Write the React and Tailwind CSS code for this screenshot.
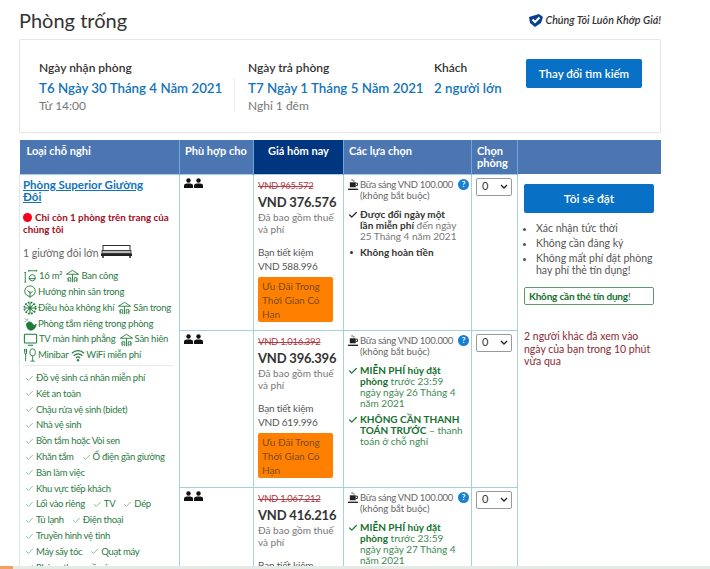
import React from "react";
import { Check } from "lucide-react";

const FONT = { fontFamily: 'Lato, "Noto Sans", sans-serif' };

const Svg = ({ w = 14, h = 14, children, vb = "0 0 16 16" }) => (
  <svg width={w} height={h} viewBox={vb} fill="none" stroke="#1f7a3a" strokeWidth="1" className="inline-block shrink-0">
    {children}
  </svg>
);

const Umbrella = () => (
  <Svg w={15} h={14}>
    <path d="M1 6 L8 1.500 L15 6 Z" />
    <path d="M8 6v9M3 15v-5h3v5M13 15v-5h-3v5M2 11l3 3M14 11l-3 3" />
  </Svg>
);
const Size = () => (
  <Svg w={15} h={14}>
    <path d="M6 2h9M6 1v2M15 1v2M2 4v11M1 4h2M1 15h2" />
    <circle cx="10" cy="10" r="3.500" />
    <path d="M6 11h8" />
  </Svg>
);
const Tree = () => (
  <Svg w={14} h={14}>
    <circle cx="8" cy="7" r="6" />
    <path d="M8 15V7M8 10l3-3M8 9 5 6" />
  </Svg>
);
const Snow = () => (
  <svg width="14" height="14" viewBox="0 0 16 16" fill="none" stroke="#1f7a3a" strokeWidth="2" className="inline-block shrink-0">
    <circle cx="8" cy="8" r="6.500" strokeDasharray="2 1.400" />
    <path d="M8 2v12M2 8h12M4 4l8 8M12 4l-8 8" strokeWidth="1.200" />
  </svg>
);
const Bath = () => (
  <Svg w={14} h={14}>
    <path d="M2 2l4 3M2 5h2M5 2v2" strokeDasharray="1 1" />
    <path d="M4 8c2-3 5-3 7 0s3 1 4 0c0 4-3 7-6 7S4 12 4 8Z" fill="#1f7a3a" />
  </Svg>
);
const Tv = () => (
  <Svg w={15} h={14}>
    <rect x="1" y="1.500" width="14" height="10" rx="1" strokeWidth="1.200" />
    <path d="M5 14h6" strokeWidth="1.200" />
  </Svg>
);
const Minibar = () => (
  <Svg w={14} h={14}>
    <path d="M2 1v5c0 1 2 1 2 0V1M3 6v9M2 1v3M4 1v3" />
    <path d="M8 4a3 3 0 0 1 6 0v2a3 3 0 0 1-6 0ZM11 9v6M8.500 15h5" />
  </Svg>
);
const Wifi = () => (
  <Svg w={14} h={14}>
    <path d="M1 6c4-4 10-4 14 0M3 9c3-3 7-3 10 0M5.500 11.500c1.500-1.500 3.500-1.500 5 0" strokeWidth="1.300" />
    <circle cx="8" cy="14" r="1" fill="#1f7a3a" />
  </Svg>
);

const Bed = () => (
  <svg width="31" height="13" viewBox="0 0 31 13" className="ml-0.5 inline-block align-[-1px]">
    <rect x="2" y="0.500" width="27" height="5" fill="none" stroke="#333" strokeWidth="1" />
    <rect x="1" y="5.500" width="29" height="3" fill="#bbb" stroke="#333" strokeWidth="0.800" />
    <rect x="0" y="8.500" width="31" height="2.500" fill="#222" />
    <path d="M2 11v2M29 11v2" stroke="#222" strokeWidth="1.500" />
  </svg>
);

const Coffee = () => (
  <svg width="10" height="12" viewBox="0 0 11 13" className="block">
    <path d="M4 0h1v2H4zM6 1h1v2H6z" fill="#555" />
    <path d="M2 3.500h6.500v5.500h-6.500z" fill="#222" />
    <path d="M8.500 4.500h2v2.500h-2" fill="none" stroke="#222" />
    <path d="M0 10.500h11v1.500H0z" fill="#222" />
  </svg>
);

const Help = () => (
  <span className="ml-[5px] inline-flex h-[11px] w-[11px] shrink-0 items-center justify-center rounded-full bg-[#1a7fd1] text-[8px] font-bold leading-none text-white">?</span>
);

const Persons = () => (
  <span className="flex gap-[1px]">
    {[0, 1].map((i) => (
      <svg key={i} width="9" height="10" viewBox="0 0 9 10">
        <circle cx="4.500" cy="2.500" r="2.200" fill="#111" />
        <path d="M0 10V7.500C0 6 1.500 5.500 4.500 5.500S9 6 9 7.500V10Z" fill="#111" />
      </svg>
    ))}
  </span>
);

const CheckLine = ({ items }) => (
  <div className="flex h-[15.800px] items-center gap-[8px] whitespace-nowrap pl-[2px] text-[9.500px] tracking-[-0.3px] text-[#2c7a43]">
    {items.map((t) => (
      <span key={t} className="flex items-center gap-[2px]">
        <Check size={9} strokeWidth={1.500} color="#2c8a48" />
        {t}
      </span>
    ))}
  </div>
);

const Amenity = ({ children }) => (
  <div className="flex h-[15.800px] items-center gap-[1px] whitespace-nowrap text-[9.500px] tracking-[-0.25px] text-[#2c7a43]">{children}</div>
);

const Select = () => (
  <div className="flex h-[18px] w-[36px] items-center justify-between rounded-[2px] border border-[#999] bg-white pl-[5px] pr-[3px] text-[11px] text-[#333]">
    <span>0</span>
    <svg width="8" height="5" viewBox="0 0 8 5" fill="none" stroke="#222" strokeWidth="1.300">
      <path d="M1 1l3 3 3-3" />
    </svg>
  </div>
);

const Price = ({ old, now, save, clip }) => (
  <div className="pl-[4px] pt-[4px]">
    <div className="text-[9.500px] leading-[13px] tracking-[-0.3px] text-[#b03a45] line-through">{old}</div>
    <div className="mt-[1px] whitespace-nowrap text-[13px] font-bold leading-[18px] tracking-[-0.2px] text-[#333]">{now}</div>
    <div className="text-[10px] leading-[12px] text-[#777]">
      Đã bao gồm thuế
      <br />
      và phí
    </div>
    <div className="mt-[10px] text-[10px] leading-[14px] tracking-[-0.2px] text-[#555]">
      Bạn tiết kiệm
      <br />
      {save}
    </div>
    {!clip && (
      <div className="mt-[4px] h-[45px] w-[75px] rounded-[2px] bg-[#ff8000] px-[4px] py-[2px] text-[10px] leading-[14px] text-[#7a4a1a]">
        Ưu Đãi Trong Thời Gian Có Hạn
      </div>
    )}
  </div>
);

const Breakfast = () => (
  <div className="mb-[8px] flex">
    <div className="w-[12px] shrink-0">
      <Coffee />
    </div>
    <div className="flex-1 text-[9.500px] leading-[11px] text-[#666]">
      <div className="flex h-[11px] items-center whitespace-nowrap tracking-[-0.3px]">
        Bữa sáng VND 100.000
        <Help />
      </div>
      (không bắt buộc)
    </div>
  </div>
);

const Opt = ({ green, bullet, children }) => (
  <div className={"mb-[5.500px] flex whitespace-nowrap text-[10px] leading-[11px] " + (green ? "text-[#3b8a52]" : "text-[#777]")}>
    <div className="w-[12px] shrink-0 pt-[1px]">
      {bullet ? (
        <span className="ml-[2px] mt-[3px] block h-[3px] w-[3px] rounded-full bg-[#333]" />
      ) : (
        <Check size={10} strokeWidth={3} color={green ? "#1b7a36" : "#222"} />
      )}
    </div>
    <div>{children}</div>
  </div>
);

const G = ({ children }) => <b className="text-[#14702f]">{children}</b>;
const K = ({ children }) => <b className="text-[#333]">{children}</b>;

const th = "border-x border-[#6fa6dc] px-[5px] pt-[5px] align-top text-[11px] font-bold leading-[12px] text-white whitespace-nowrap";
const td = "border border-[#a6cfe2] p-0 align-top";
const label = "text-[12px] font-semibold leading-[16px] text-[#333]";
const blue = "mt-[3px] whitespace-nowrap text-[13.300px] font-semibold leading-[18px] text-[#1173ba]";
const sub = "mt-[1px] text-[12px] leading-[15px] text-[#777]";

export default function App() {
  return (
    <div style={FONT} className="relative h-[569px] w-[710px] overflow-hidden bg-white">
      <div className="flex items-start justify-between pl-[19px] pr-[49px]">
        <h1 className="mt-[4px] text-[20px] leading-[32px] text-[#333]">Phòng trống</h1>
        <div className="mt-[13px] flex items-center gap-[2px] text-[10.700px] font-semibold italic leading-[14px] text-[#333]">
          <svg width="14" height="13" viewBox="0 0 14 13">
            <path d="M0 3 L10 0 L14 3 L12 9 L6 13 L1 9 Z" fill="#0c3f8c" />
            <path d="M3.500 5.500 L6 8 L10.500 3.500" fill="none" stroke="#fff" strokeWidth="2" />
          </svg>
          Chúng Tôi Luôn Khớp Giá!
        </div>
      </div>

      <div className="ml-[19px] mt-[3px] flex h-[94px] w-[642px] rounded-[2px] border border-[#e6e6e6] pl-[19px] pt-[20px]">
        <div className="w-[195px]">
          <div className={label}>Ngày nhận phòng</div>
          <div className={blue}>T6 Ngày 30 Tháng 4 Năm 2021</div>
          <div className={sub}>Từ 14:00</div>
        </div>
        <div className="mb-[20px] mt-[18px] w-[1px] bg-[#eee]" />
        <div className="ml-[13px] w-[186px]">
          <div className={label}>Ngày trả phòng</div>
          <div className={blue}>T7 Ngày 1 Tháng 5 Năm 2021</div>
          <div className={sub}>Nghỉ 1 đêm</div>
        </div>
        <div className="w-[92px]">
          <div className={label}>Khách</div>
          <div className={blue}>2 người lớn</div>
        </div>
        <div className="-mt-[1px] h-[29px] w-[116px] rounded-[2px] bg-[#0870c5] text-center text-[11.500px] font-semibold leading-[29px] text-white">Thay đổi tìm kiếm</div>
      </div>

      <table className="ml-[19px] mt-[7px] w-[641px] table-fixed border-collapse">
        <colgroup>
          <col className="w-[160px]" />
          <col className="w-[74px]" />
          <col className="w-[90px]" />
          <col className="w-[128px]" />
          <col className="w-[46px]" />
          <col className="w-[143px]" />
        </colgroup>
        <thead>
          <tr className="h-[34px] bg-[#4c76b2]">
            <th className={th + " border-l-0 pl-[7px] text-left"}>Loại chỗ nghỉ</th>
            <th className={th + " text-left"}>Phù hợp cho</th>
            <th className={th + " bg-[#003580] text-center"}>Giá hôm nay</th>
            <th className={th + " text-left"}>Các lựa chọn</th>
            <th className={th + " text-left"}>
              Chọn
              <br />
              phòng
            </th>
            <th className={th + " border-r-0"} />
          </tr>
        </thead>
        <tbody>
          <tr className="h-[156px]">
            <td rowSpan={3} className={td + " border-l-[#dbe8f0] px-[3px]"}>
              <div className="h-[392px] overflow-hidden pt-[4px]">
                <div className="text-[11.500px] font-bold leading-[12.500px] text-[#1173ba] underline">
                  Phòng Superior Giường
                  <br />
                  Đôi
                </div>
                <div className="mt-[7px] text-[9.800px] font-bold leading-[12px] text-[#a30c1e]">
                  <span className="mr-[3px] inline-block h-[9px] w-[9px] rounded-full bg-[#f5001c] align-[-1px]" />
                  Chỉ còn 1 phòng trên trang của chúng tôi
                </div>
                <div className="mt-[10px] text-[10.500px] leading-[14px] text-[#666]">
                  1 giường đôi lớn
                  <Bed />
                </div>
                <div className="mt-[9px]">
                  <Amenity><Size /> 16 m²&nbsp;<Umbrella /> Ban công</Amenity>
                  <Amenity><Tree /> Hướng nhìn sân trong</Amenity>
                  <Amenity><Snow /> Điều hòa không khí&nbsp;<Umbrella /> Sân trong</Amenity>
                  <Amenity><Bath /> Phòng tắm riêng trong phòng</Amenity>
                  <Amenity><Tv /> TV màn hình phẳng&nbsp;<Umbrella /> Sân hiên</Amenity>
                  <Amenity><Minibar /> Minibar&nbsp;<Wifi /> WiFi miễn phí</Amenity>
                </div>
                <div className="mb-[4px] mt-[2px] h-[1px] w-[150px] bg-[#e8e8e8]" />
                <CheckLine items={["Đồ vệ sinh cá nhân miễn phí"]} />
                <CheckLine items={["Két an toàn"]} />
                <CheckLine items={["Chậu rửa vệ sinh (bidet)"]} />
                <CheckLine items={["Nhà vệ sinh"]} />
                <CheckLine items={["Bồn tắm hoặc Vòi sen"]} />
                <CheckLine items={["Khăn tắm", "Ổ điện gần giường"]} />
                <CheckLine items={["Bàn làm việc"]} />
                <CheckLine items={["Khu vực tiếp khách"]} />
                <CheckLine items={["Lối vào riêng", "TV", "Dép"]} />
                <CheckLine items={["Tủ lạnh", "Điện thoại"]} />
                <CheckLine items={["Truyền hình vệ tinh"]} />
                <CheckLine items={["Máy sấy tóc", "Quạt máy"]} />
                <CheckLine items={["Phòng thay quần áo"]} />
              </div>
            </td>
            <td className={td}>
              <div className="pl-[4px] pt-[3px]"><Persons /></div>
            </td>
            <td className={td}>
              <Price old="VND 965.572" now="VND 376.576" save="VND 588.996" />
            </td>
            <td className={td}>
              <div className="pl-[4px] pr-[5px] pt-[4px]">
                <Breakfast />
                <Opt>
                  <K>Được đổi ngày một</K>
                  <br />
                  <K>lần miễn phí</K> đến ngày
                  <br />
                  25 Tháng 4 năm 2021
                </Opt>
                <Opt bullet>
                  <K>Không hoàn tiền</K>
                </Opt>
              </div>
            </td>
            <td className={td}>
              <div className="pl-[4px] pt-[3px]"><Select /></div>
            </td>
            <td rowSpan={3} className="border-l border-[#a6cfe2] p-0 align-top">
              <div className="h-[392px] overflow-hidden pl-[6px] pr-[6px] pt-[10px]">
                <div className="h-[29px] w-[130px] rounded-[2px] bg-[#0870c5] text-center text-[12px] font-semibold leading-[29px] text-white">Tôi sẽ đặt</div>
                <ul className="mt-[9px] list-disc pl-[12px] text-[10.500px] leading-[12px] text-[#555]">
                  <li className="mb-[3px]">Xác nhận tức thời</li>
                  <li className="mb-[3px]">Không cần đăng ký</li>
                  <li>Không mất phí đặt phòng hay phí thẻ tín dụng!</li>
                </ul>
                <div className="mt-[11px] flex h-[18px] w-[130px] items-center rounded-[2px] border border-[#5b9a6b] pl-[4px] text-[10px] leading-none tracking-[-0.2px] text-[#555]">
                  <b className="text-[#14702f]">Không cần thẻ tín dụng</b>!
                </div>
                <div className="mt-[25px] text-[10.500px] leading-[12.500px] text-[#8c2a35]">2 người khác đã xem vào ngày của bạn trong 10 phút vừa qua</div>
              </div>
            </td>
          </tr>
          <tr className="h-[157px]">
            <td className={td}>
              <div className="pl-[4px] pt-[3px]"><Persons /></div>
            </td>
            <td className={td}>
              <Price old="VND 1.016.392" now="VND 396.396" save="VND 619.996" />
            </td>
            <td className={td}>
              <div className="pl-[4px] pr-[5px] pt-[4px]">
                <Breakfast />
                <Opt green>
                  <G>MIỄN PHÍ hủy đặt</G>
                  <br />
                  <G>phòng</G> trước 23:59
                  <br />
                  ngày ngày 26 Tháng 4
                  <br />
                  năm 2021
                </Opt>
                <Opt green>
                  <G>KHÔNG CẦN THANH</G>
                  <br />
                  <G>TOÁN TRƯỚC</G> – thanh
                  <br />
                  toán ở chỗ nghỉ
                </Opt>
              </div>
            </td>
            <td className={td}>
              <div className="pl-[4px] pt-[3px]"><Select /></div>
            </td>
          </tr>
          <tr>
            <td className={td}>
              <div className="pl-[4px] pt-[3px]"><Persons /></div>
            </td>
            <td className={td}>
              <Price old="VND 1.067.212" now="VND 416.216" save="VND 640.996" clip />
            </td>
            <td className={td}>
              <div className="pl-[4px] pr-[5px] pt-[4px]">
                <Breakfast />
                <Opt green>
                  <G>MIỄN PHÍ hủy đặt</G>
                  <br />
                  <G>phòng</G> trước 23:59
                  <br />
                  ngày ngày 27 Tháng 4
                  <br />
                  năm 2021
                </Opt>
              </div>
            </td>
            <td className={td}>
              <div className="pl-[4px] pt-[3px]"><Select /></div>
            </td>
          </tr>
        </tbody>
      </table>
      <div className="absolute bottom-0 left-0 flex h-[3px] w-full bg-[#e3ebe4]">
        <div className="h-full w-[13px] bg-[#f0a060]" />
      </div>
    </div>
  );
}
